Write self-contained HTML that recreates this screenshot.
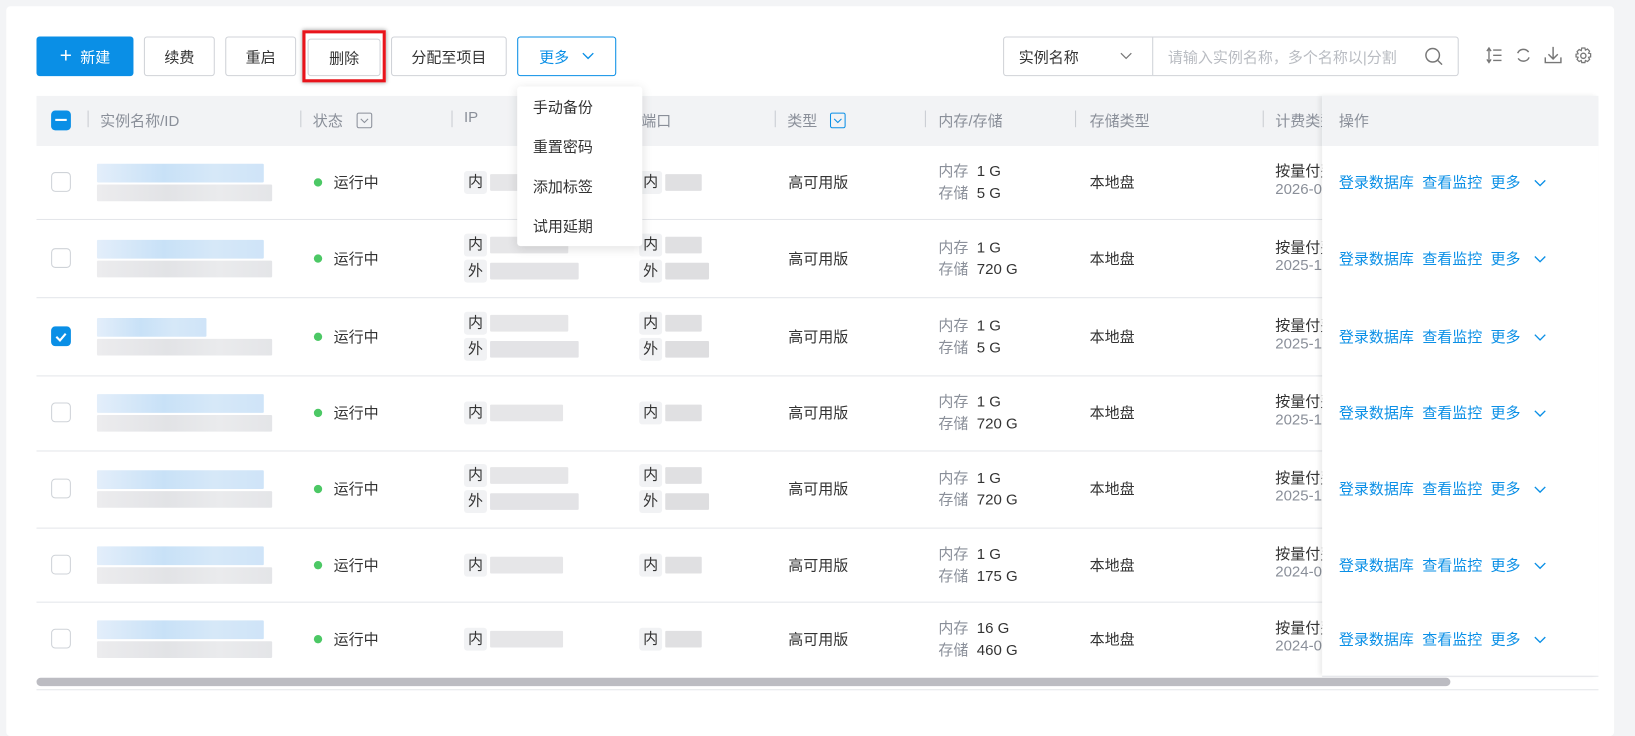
<!DOCTYPE html>
<html><head><meta charset="utf-8"><style>
*{box-sizing:border-box;margin:0;padding:0}
body{width:1635px;height:694px;background:#f3f4f6;overflow:hidden;position:relative}
#w{position:absolute;left:0;top:0;width:1568px;height:666px;transform:scale(1.0427);transform-origin:0 0;font-family:"Liberation Sans","Noto Sans CJK SC",sans-serif;font-size:14.4px;color:#333}
.a{position:absolute}
.card{left:6px;top:6px;width:1542px;height:700px;background:#fff;border-radius:4px}
.btn{position:absolute;top:35px;height:38px;border:1px solid #d0d3d8;border-radius:3px;background:#fff;display:flex;align-items:center;justify-content:center;color:#333}
.hdr{left:35px;top:92px;width:1498px;height:48px;background:#f2f3f5}
.ht{position:absolute;top:105px;color:#8a8f99}
.sep{position:absolute;top:106px;width:1px;height:16px;background:#c9ccd2}
.line{position:absolute;left:35px;width:1233px;height:1px;background:#e4e6ea}
.cb{position:absolute;left:49px;width:19px;height:19px;border:1px solid #cfd3d8;border-radius:4px;background:#fff}
.blur{position:absolute;border-radius:1px}
.dot{position:absolute;width:8px;height:8px;border-radius:50%;background:#4cc865}
.tag{position:absolute;width:22px;height:22px;background:#f1f2f4;border-radius:3px;text-align:center;line-height:22px;color:#333}
.g{color:#8a8f99}
.lnk{color:#0a8fe6}
</style></head><body><div id="w">
<div class="a card"></div>
<div class="btn" style="left:35px;width:93px;background:#0a8fe6;border-color:#0a8fe6;color:#fff"><span style="font-size:20px;margin-right:8px;font-weight:300">+</span>新建</div>
<div class="btn" style="left:138px;width:68px">续费</div>
<div class="btn" style="left:216px;width:68px">重启</div>
<div class="a" style="left:290px;top:29px;width:80px;height:50px;border:3px solid #e8141b;box-shadow:0 0 4px rgba(0,0,0,.4)"></div>
<div class="btn" style="left:295px;width:70px;top:37px;height:36px">删除</div>
<div class="btn" style="left:375px;width:111px">分配至项目</div>
<div class="btn" style="left:496px;width:95px;border-color:#0a8fe6;color:#0a8fe6">更多<svg width="12" height="8" style="margin-left:12px"><path d="M1 1l5 5 5-5" stroke="#0a8fe6" fill="none" stroke-width="1.3"/></svg></div>
<div class="a" style="left:962px;top:35px;width:437px;height:38px;border:1px solid #d0d3d8;border-radius:3px"></div>
<div class="a" style="left:1105px;top:36px;width:1px;height:36px;background:#d0d3d8"></div>
<div class="a" style="left:977px;top:44px">实例名称</div>
<svg class="a" style="left:1074px;top:50px" width="12" height="8"><path d="M1 1l5 5 5-5" stroke="#777" fill="none" stroke-width="1.2"/></svg>
<div class="a" style="left:1120px;top:44px;color:#b9bcc2">请输入实例名称，多个名称以|分割</div>
<svg class="a" style="left:1366px;top:45px" width="18" height="18"><circle cx="8" cy="8" r="6.5" stroke="#777" fill="none" stroke-width="1.4"/><path d="M13 13l4 4" stroke="#777" stroke-width="1.4"/></svg>
<svg class="a" style="left:1425px;top:45px" width="16" height="16"><path d="M3 1v14M1 4l2-3 2 3M1 12l2 3 2-3M7 3h8M7 8h8M7 13h8" stroke="#777" fill="none" stroke-width="1.3"/></svg>
<svg class="a" style="left:1453px;top:45px" width="16" height="16"><path d="M13 5A6 6 0 0 0 2.5 6M3 11a6 6 0 0 0 10.5-1" stroke="#777" fill="none" stroke-width="1.4"/></svg>
<svg class="a" style="left:1481px;top:44px" width="17" height="18"><path d="M8.5 1v11M4 8l4.5 4.5L13 8M1 11v5h15v-5" stroke="#777" fill="none" stroke-width="1.4"/></svg>
<svg class="a" style="left:1510px;top:45px" width="17" height="17"><circle cx="8.5" cy="8.5" r="2.5" stroke="#777" fill="none" stroke-width="1.3"/><path d="M7 1h3l.5 2 2-1 2 2-1 2 2 .5v3l-2 .5 1 2-2 2-2-1-.5 2H7l-.5-2-2 1-2-2 1-2-2-.5V7l2-.5-1-2 2-2 2 1z" stroke="#777" fill="none" stroke-width="1.2"/></svg>

<div class="a hdr"></div>
<div class="a" style="left:49px;top:106px;width:19px;height:19px;background:#0a8fe6;border-radius:4px"><div style="position:absolute;left:4px;top:8px;width:11px;height:2px;background:#fff"></div></div>
<div class="sep" style="left:84px"></div><div class="ht" style="left:96px">实例名称/ID</div>
<div class="sep" style="left:288px"></div><div class="ht" style="left:300px">状态</div>
<div class="a" style="left:342px;top:108px;width:15px;height:15px;border:1px solid #8a8f99;border-radius:2px"></div>
<svg class="a" style="left:345px;top:113px" width="9" height="6"><path d="M1 1l3.5 3.5L8 1" stroke="#8a8f99" fill="none"/></svg>
<div class="sep" style="left:433px"></div><div class="ht" style="left:445px">IP</div>
<div class="ht" style="left:615px">端口</div>
<div class="sep" style="left:743px"></div><div class="ht" style="left:755px">类型</div>
<div class="a" style="left:796px;top:108px;width:15px;height:15px;border:1px solid #0a8fe6;border-radius:2px"></div>
<svg class="a" style="left:799px;top:113px" width="9" height="6"><path d="M1 1l3.5 3.5L8 1" stroke="#0a8fe6" fill="none"/></svg>
<div class="sep" style="left:887px"></div><div class="ht" style="left:900px">内存/存储</div>
<div class="sep" style="left:1031px"></div><div class="ht" style="left:1045px">存储类型</div>
<div class="sep" style="left:1211px"></div><div class="ht" style="left:1223px">计费类型</div>

<div id="rows"></div>

<div class="a" style="left:1268px;top:92px;width:265px;height:556px;background:#fff;box-shadow:-3px 0 4px rgba(0,0,0,.07)"></div>
<div class="a" style="left:1268px;top:92px;width:265px;height:48px;background:#f2f3f5"></div>
<div class="ht" style="left:1284px">操作</div>
<div id="ops"></div>

<div class="a" style="left:35px;top:650px;width:1356px;height:8px;border-radius:4px;background:#bcbcc2"></div>
<div class="a" style="left:35px;top:661px;width:1498px;height:1px;background:#e4e6ea"></div>

<div class="a" style="left:496px;top:83px;width:120px;height:153px;background:#fff;border-radius:3px;box-shadow:0 2px 10px rgba(0,0,0,.12)"></div>
<div class="a" style="left:511px;top:92px">手动备份</div>
<div class="a" style="left:511px;top:130px">重置密码</div>
<div class="a" style="left:511px;top:168px">添加标签</div>
<div class="a" style="left:511px;top:206px">试用延期</div>
</div>
<script>
var R=[[140,210,0,'1 G','5 G','2026-0',0],[210,285,1,'1 G','720 G','2025-1',0],[285,360,1,'1 G','5 G','2025-1',1],[360,432,0,'1 G','720 G','2025-1',0],[432,506,1,'1 G','720 G','2025-1',0],[506,577,0,'1 G','175 G','2024-0',0],[577,648,0,'16 G','460 G','2024-0',0]];
var h='',o='';
R.forEach(function(r,i){var t=r[0],b=r[1],c=(t+b)/2;
if(i>0)h+='<div class="line" style="top:'+t+'px"></div>';
h+='<div class="line" style="left:1268px;width:265px;top:'+b+'px"></div>';
if(r[6])h+='<div class="cb" style="top:'+(c-10)+'px;background:#0a8fe6;border-color:#0a8fe6"><svg width="17" height="17"><path d="M4 9l3.5 3.5L13 6" stroke="#fff" stroke-width="2" fill="none"/></svg></div>';
else h+='<div class="cb" style="top:'+(c-10)+'px"></div>';
var w=i==2?105:160;
h+='<div class="blur" style="left:93px;top:'+(c-18)+'px;width:'+w+'px;height:18px;background:linear-gradient(90deg,#e3eefa,#c8e1f7 40%,#d6e8f8 70%,#cfe4f8)"></div>';
h+='<div class="blur" style="left:93px;top:'+(c+2)+'px;width:168px;height:16px;background:linear-gradient(90deg,#ececee,#e2e3e6 40%,#eaebed 70%,#e4e5e8)"></div>';
h+='<div class="dot" style="left:301px;top:'+(c-4)+'px"></div><div class="a" style="left:320px;top:'+(c-11)+'px">运行中</div>';
if(r[2]){
h+='<div class="tag" style="left:445px;top:'+(c-24)+'px">内</div><div class="blur" style="left:470px;top:'+(c-21)+'px;width:75px;height:16px;background:#e6e6e8"></div>';
h+='<div class="tag" style="left:445px;top:'+(c+1)+'px">外</div><div class="blur" style="left:470px;top:'+(c+4)+'px;width:85px;height:16px;background:#e3e3e6"></div>';
h+='<div class="tag" style="left:613px;top:'+(c-24)+'px">内</div><div class="blur" style="left:638px;top:'+(c-21)+'px;width:35px;height:16px;background:#e0e0e2"></div>';
h+='<div class="tag" style="left:613px;top:'+(c+1)+'px">外</div><div class="blur" style="left:638px;top:'+(c+4)+'px;width:42px;height:16px;background:#dedee0"></div>';
}else{
h+='<div class="tag" style="left:445px;top:'+(c-11)+'px">内</div><div class="blur" style="left:470px;top:'+(c-8)+'px;width:70px;height:16px;background:#e6e6e8"></div>';
h+='<div class="tag" style="left:613px;top:'+(c-11)+'px">内</div><div class="blur" style="left:638px;top:'+(c-8)+'px;width:35px;height:16px;background:#e0e0e2"></div>';}
h+='<div class="a" style="left:756px;top:'+(c-11)+'px">高可用版</div>';
h+='<div class="a" style="left:900px;top:'+(c-22)+'px"><span class="g">内存</span>&nbsp;&nbsp;'+r[3]+'</div>';
h+='<div class="a" style="left:900px;top:'+(c-1)+'px"><span class="g">存储</span>&nbsp;&nbsp;'+r[4]+'</div>';
h+='<div class="a" style="left:1045px;top:'+(c-11)+'px">本地盘</div>';
h+='<div class="a" style="left:1223px;top:'+(c-22)+'px">按量付费</div><div class="a g" style="left:1223px;top:'+(c-1)+'px">'+r[5]+'2-01</div>';
o+='<div class="a lnk" style="left:1284px;top:'+(c-11)+'px">登录数据库&nbsp;&nbsp;查看监控&nbsp;&nbsp;更多</div><svg class="a" style="left:1471px;top:'+(c-3)+'px" width="12" height="8"><path d="M1 1l5 5 5-5" stroke="#0a8fe6" fill="none" stroke-width="1.3"/></svg>';
});
document.getElementById('rows').outerHTML=h;
document.getElementById('ops').outerHTML=o;
</script>
</body></html>
